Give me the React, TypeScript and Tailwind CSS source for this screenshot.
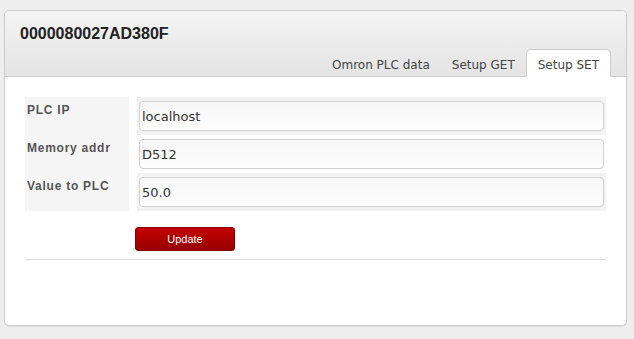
import React from 'react';

const rows = [
  { label: 'PLC IP', value: 'localhost' },
  { label: 'Memory addr', value: 'D512' },
  { label: 'Value to PLC', value: '50.0' },
];

const tabs = ['Omron PLC data', 'Setup GET', 'Setup SET'];

export default function App() {
  return (
    <div className="w-[634px] h-[339px] bg-[#eeeeee] pt-[10px] pl-[4px] overflow-hidden">
      <div className="w-[623px] h-[316px] rounded-[5px] border border-[#cccccc] bg-white overflow-hidden shadow-[0_1px_1px_rgba(0,0,0,0.06)]">
        {/* header with title and tabs */}
        <div className="h-[66px] bg-gradient-to-b from-[#f4f4f4] to-[#e4e4e4] border-b border-[#cccccc] flex flex-col justify-between">
          <h1 className="pl-[15px] pt-[13px] text-[16px] leading-[20px] font-bold text-[#222222] font-['Liberation_Sans',Arial,sans-serif]">
            0000080027AD380F
          </h1>
          <div className="flex justify-end pr-[15px] -mb-px font-['DejaVu_Sans',Verdana,sans-serif] text-[12px] text-[#444444]">
            {tabs.map((t) => {
              const active = t === 'Setup SET';
              return (
                <div
                  key={t}
                  className={
                    active
                      ? 'h-[28px] px-[11px] pt-[6px] bg-white border border-[#cccccc] border-b-white rounded-t-[5px]'
                      : 'h-[28px] px-[11px] pt-[7px]'
                  }
                >
                  {t}
                </div>
              );
            })}
          </div>
        </div>

        {/* form */}
        <div className="px-[20px] pt-[20px]">
          <div className="flex flex-col">
            {rows.map((r, i) => (
              <div key={r.label} className="flex h-[38px]">
                <div className="w-[104px] bg-[#f5f5f5] pl-[2px] pt-[6px] text-[12px] leading-[15px] tracking-[0.75px] font-bold text-[#555555] font-['Liberation_Sans',Arial,sans-serif]">
                  {r.label}
                </div>
                <div className={`ml-[8px] flex-1 px-[2px] py-[4px] ${i % 2 === 1 ? 'bg-white' : 'bg-[#f2f2f2]'}`}>
                  <input
                    readOnly
                    value={r.value}
                    className="w-full h-[30px] rounded-[4px] border border-[#d2d2d2] bg-gradient-to-b from-[#f7f7f7] to-[#fdfdfd] pl-[2px] text-[13px] text-[#333333] font-['DejaVu_Sans',Verdana,sans-serif] outline-none"
                  />
                </div>
              </div>
            ))}
          </div>

          <div className="pl-[110px] pt-[14px] pb-[8px]">
            <button className="w-[100px] h-[24px] rounded-[3px] border border-[#8a0000] bg-gradient-to-b from-[#c40000] to-[#980000] text-white text-[11px] font-['Liberation_Sans',Arial,sans-serif]">
              Update
            </button>
          </div>
          <div className="h-px bg-[#dddddd]" />
        </div>
      </div>
    </div>
  );
}
